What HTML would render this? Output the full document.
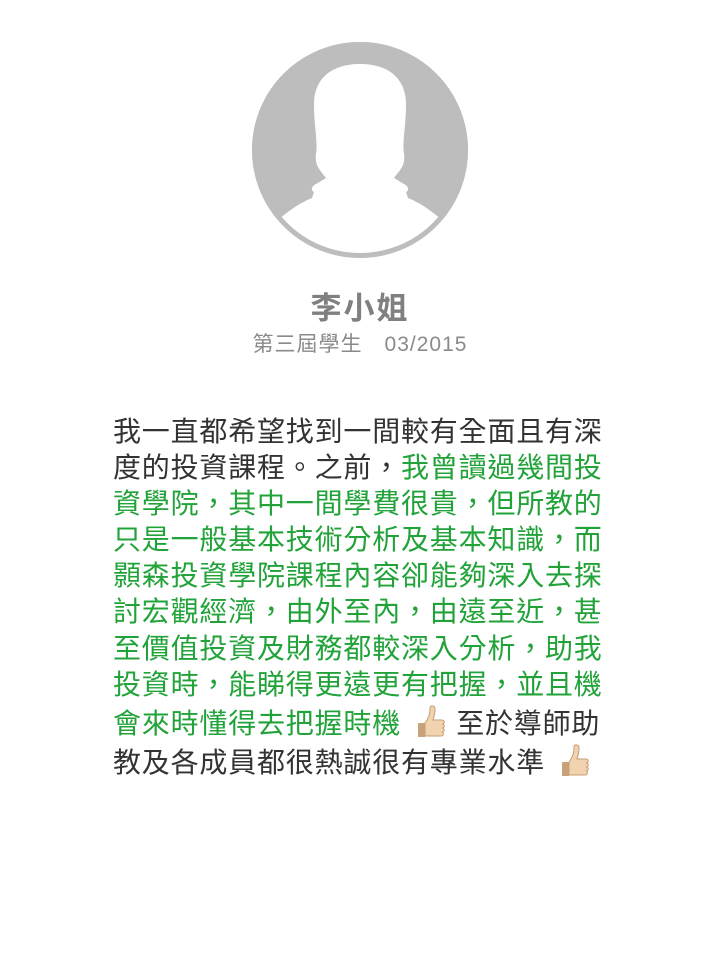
<!DOCTYPE html>
<html><head><meta charset="utf-8"><style>
html,body{margin:0;padding:0;background:#fff;width:720px;height:980px;overflow:hidden}
.av{position:absolute;left:252px;top:42px;width:216px;height:216px}
.name{position:absolute;top:283px;left:0;width:720px;text-align:center;font:bold 31px "Liberation Sans","Noto Sans CJK TC",sans-serif;color:#808080;letter-spacing:2px}
.sub{position:absolute;top:328px;left:0;width:720px;text-align:center;font:21px "Liberation Sans Narrow","Liberation Sans","Noto Sans CJK TC",sans-serif;color:#8a8a8a;letter-spacing:1px}
.txt{position:absolute;left:113px;top:414px;width:520px;font:28px/36.1px "Liberation Sans","Noto Sans CJK TC",sans-serif;color:#333;letter-spacing:0.8px;white-space:nowrap}
.g{color:#22a33a}
svg.t{width:38px;height:38px;vertical-align:-8px}
</style></head><body>
<div class="av"><svg width="216" height="216" viewBox="0 0 216 216">
<defs><clipPath id="c"><circle cx="108" cy="108" r="108"/></clipPath></defs>
<circle cx="108" cy="108" r="108" fill="#bdbdbd"/>
<g clip-path="url(#c)">
<path d="M108 22 C78 22 62 38 62 62 C62 85 66 100 64 112 C62 124 70 130 74 136 L64 142 C60 144 58 148 62 150 L60 156 C50 160 40 166 26 178 L0 200 L0 230 L216 230 L216 200 L190 178 C176 166 166 160 156 156 L154 150 C158 148 156 144 152 142 L142 136 C146 130 154 124 152 112 C150 100 154 85 154 62 C154 38 138 22 108 22 Z" fill="#fff"/>
</g>
<circle cx="108" cy="108" r="105.5" fill="none" stroke="#bdbdbd" stroke-width="5"/>
</svg></div>
<div class="name">李小姐</div>
<div class="sub">第三屆學生　03/2015</div>
<div class="txt">我一直都希望找到一間較有全面且有深<br>度的投資課程。之前，<span class="g">我曾讀過幾間投<br>資學院，其中一間學費很貴，但所教的<br>只是一般基本技術分析及基本知識，而<br>顥森投資學院課程內容卻能夠深入去探<br>討宏觀經濟，由外至內，由遠至近，甚<br>至價值投資及財務都較深入分析，助我<br>投資時，能睇得更遠更有把握，並且機<br>會來時懂得去把握時機</span> <svg class="t" viewBox="0 0 38 38"><path d="M8 20 h7 v14 h-7z" fill="#c9a27a"/><path d="M15 20 C18 16 20 12 20 5 C20 2 25 2 25 6 C25 11 24 14 23 17 L32 17 C35 17 35 21 32 21 C35 21 35 25 32 25 C35 25 35 29 32 29 C34 29 34 33 31 33 L15 33 Z" fill="#f1d3b0" stroke="#c69c76" stroke-width="1"/></svg> 至於導師助<br>教及各成員都很熱誠很有專業水準 <svg class="t" viewBox="0 0 38 38"><path d="M8 20 h7 v14 h-7z" fill="#c9a27a"/><path d="M15 20 C18 16 20 12 20 5 C20 2 25 2 25 6 C25 11 24 14 23 17 L32 17 C35 17 35 21 32 21 C35 21 35 25 32 25 C35 25 35 29 32 29 C34 29 34 33 31 33 L15 33 Z" fill="#f1d3b0" stroke="#c69c76" stroke-width="1"/></svg></div>
</body></html>
